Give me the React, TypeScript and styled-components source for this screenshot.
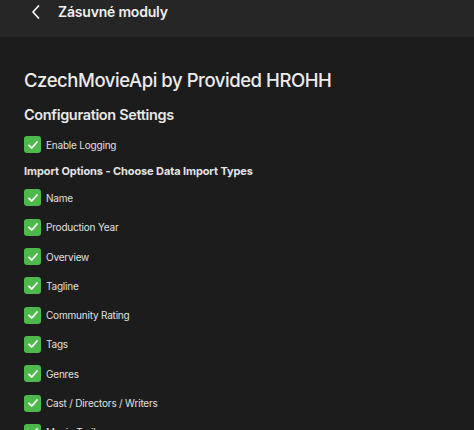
import React from "react";
import styled, { createGlobalStyle } from "styled-components";

const GlobalStyle = createGlobalStyle`
  html, body {
    margin: 0;
    padding: 0;
    background: #1c1c1c;
  }
  body {
    font-family: Inter, "Noto Sans", "Liberation Sans", sans-serif;
    color: #e6e6e6;
  }
`;

const importOptions = [
  "Name",
  "Production Year",
  "Overview",
  "Tagline",
  "Community Rating",
  "Tags",
  "Genres",
  "Cast / Directors / Writers",
  "Movie Trailers",
];

const Page = styled.div`
  width: 474px;
  height: 430px;
  overflow: hidden;
  background: #1c1c1c;
`;

const Header = styled.header`
  height: 37px;
  background: #262626;
  display: flex;
  align-items: flex-start;
  padding-left: 28px;
  box-sizing: border-box;
`;

const BackButton = styled.button`
  width: 16px;
  height: 24px;
  padding: 0;
  border: none;
  background: none;
  color: #f2f2f2;
  display: flex;
  align-items: center;
  justify-content: center;
`;

const HeaderTitle = styled.h1`
  margin: 3px 0 0 14px;
  font-size: 14px;
  font-weight: 600;
  letter-spacing: -0.2px;
  color: #f0f0f0;
  line-height: 18px;
`;

const Content = styled.main`
  padding: 31px 24px 0;
`;

const PluginTitle = styled.h2`
  margin: 0;
  font-size: 18.5px;
  font-weight: 500;
  letter-spacing: -0.45px;
  line-height: 24px;
  color: #ececec;
`;

const SectionTitle = styled.h3`
  margin: 13px 0 0;
  font-size: 14.5px;
  font-weight: 600;
  letter-spacing: -0.35px;
  line-height: 20px;
  color: #e8e8e8;
`;

const SubTitle = styled.h4`
  margin: 4px 0 4px;
  font-size: 11px;
  font-weight: 700;
  letter-spacing: -0.1px;
  line-height: 16px;
  color: #e4e4e4;
`;

const CheckRow = styled.label<{ $first?: boolean }>`
  display: flex;
  align-items: center;
  gap: 5px;
  height: 29.3px;
  font-size: 10px;
  letter-spacing: -0.2px;
  color: #e0e0e0;
  margin-top: ${(p) => (p.$first ? "5px" : "0")};
`;

const Box = styled.span`
  width: 17px;
  height: 17px;
  border-radius: 3px;
  background: #4cb94a;
  display: flex;
  align-items: center;
  justify-content: center;
  flex-shrink: 0;
`;

const Check = () => (
  <Box>
    <svg width="12" height="12" viewBox="0 0 12 12">
      <path
        d="M2 6.3 L4.8 9 L10 3"
        fill="none"
        stroke="#fff"
        strokeWidth="1.8"
        strokeLinecap="round"
        strokeLinejoin="round"
      />
    </svg>
  </Box>
);

export default function App() {
  return (
    <Page>
      <GlobalStyle />
      <Header>
        <BackButton aria-label="Back">
          <svg width="10" height="16" viewBox="0 0 10 16">
            <path
              d="M7.5 2 L2 8 L7.5 14"
              fill="none"
              stroke="currentColor"
              strokeWidth="1.8"
              strokeLinecap="round"
              strokeLinejoin="round"
            />
          </svg>
        </BackButton>
        <HeaderTitle>Zásuvné moduly</HeaderTitle>
      </Header>
      <Content>
        <PluginTitle>CzechMovieApi by Provided HROHH</PluginTitle>
        <SectionTitle>Configuration Settings</SectionTitle>
        <CheckRow $first>
          <Check />
          Enable Logging
        </CheckRow>
        <SubTitle>Import Options - Choose Data Import Types</SubTitle>
        {importOptions.map((o) => (
          <CheckRow key={o}>
            <Check />
            {o}
          </CheckRow>
        ))}
      </Content>
    </Page>
  );
}
